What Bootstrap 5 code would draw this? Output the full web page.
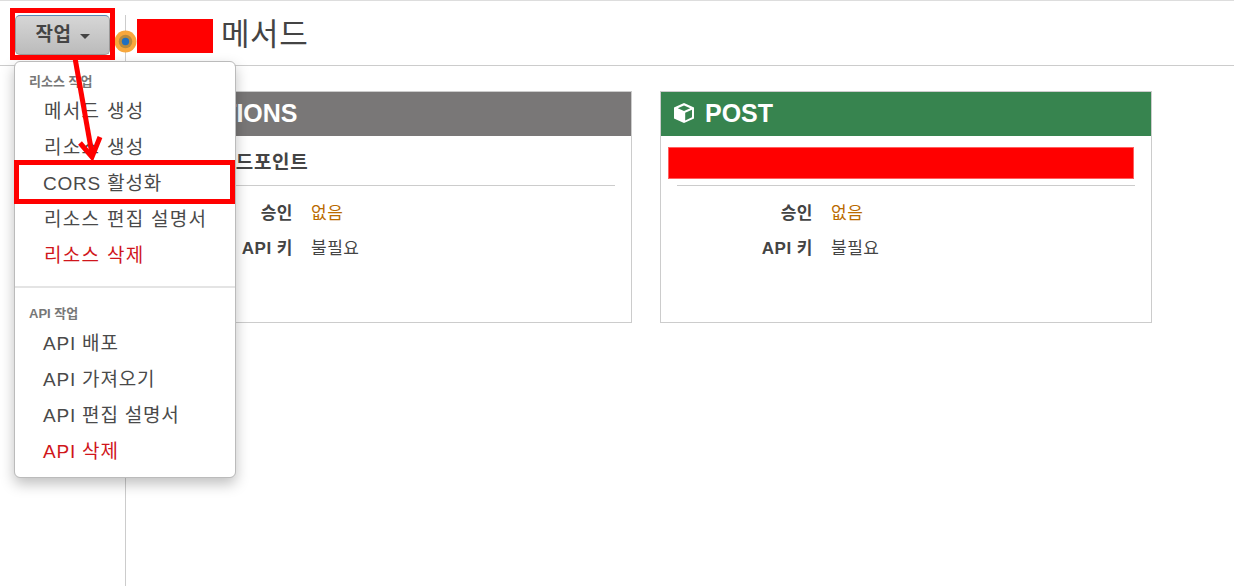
<!DOCTYPE html>
<html lang="ko">

<head>
  <meta charset="UTF-8" />
  <title>메서드</title>
  <link rel="stylesheet" href="https://cdn.jsdelivr.net/npm/bootstrap@5.3.3/dist/css/bootstrap.min.css" />
  <style>
    html, body { height: 586px; overflow: hidden; }
    body { font-family: "Liberation Sans", "Noto Sans CJK KR", sans-serif; color: #444; background: #fff; position: relative; }
    .top-bar { height: 66px; border-top: 1px solid #ddd; border-bottom: 1px solid #ccc; }
    .action-cell { width: 126px; padding-left: 15px; border-right: 1px solid #ccc; margin-top: 14px; height: 51px; }
    .action-btn { width: 95px; height: 40px; padding: 0; color: #444; font-size: 19px; letter-spacing: .6px; font-weight: 700; border: 1px solid #999; border-top-color: #5b87b5; border-radius: 5px; background: linear-gradient(#d6d6d6, #bbb); }
    .caret-mark { display: inline-block; margin-left: 8px; vertical-align: 2px; border-top: 5px solid #444; border-left: 5px solid transparent; border-right: 5px solid transparent; }
    .title-cell { padding-left: 11px; }
    .title-block { width: 76px; height: 34px; margin-top: 18px; background: #f00; }
    .title-text { margin: 17px 0 0 8px; font-size: 31px; letter-spacing: .6px; line-height: 34px; color: #444; }
    .side-line { position: absolute; left: 125px; top: 66px; bottom: 0; border-left: 1px solid #ccc; }
    .action-menu { position: absolute; left: 14px; top: 61px; width: 222px; height: 417px; margin: 0; padding: 11px 0 0; z-index: 5; border: 1px solid #bbb; border-radius: 6px; box-shadow: 0 6px 14px rgba(0, 0, 0, .25); --bs-dropdown-min-width: 0; }
    .menu-head { padding: 0 14px; margin-bottom: 3px; font-size: 13px; line-height: 18px; font-weight: 700; color: #777; }
    .menu-item { padding: 0 29px; height: 36px; line-height: 36px; font-size: 19px; letter-spacing: .8px; color: #4a4a4a; }
    .menu-ko { letter-spacing: 1.3px; }
    .menu-api { padding-left: 28px; }
    .menu-item.text-danger { color: #d0161b !important; }
    .menu-rule { margin: 12px 0 17px; border-top: 2px solid #e4e4e4; opacity: 1; }
    .panel-row { padding: 25px 0 0 140px; gap: 28px; }
    .method-panel { width: 492px; height: 232px; border: 1px solid #ccc; --bs-card-border-radius: 0; --bs-card-inner-border-radius: 0; }
    .method-panel .method-head { height: 44px; padding: 0 12px 2px; gap: 10px; color: #fff; font-size: 25px; font-weight: 700; line-height: 42px; border: 0; }
    .head-grey { background: #797777; }
    .head-green { background: #37844f; }
    .endpoint-line { height: 50px; margin: 0 16px; border-bottom: 1px solid #ccc; font-size: 19px; letter-spacing: .7px; font-weight: 700; line-height: 54px; text-align: left; position: relative; }
    .endpoint-block { position: absolute; left: -9px; top: 11px; width: 466px; height: 32px; background: #f00; border: 1px solid #ff6060; }
    .info-row { display: flex; height: 35px; line-height: 35px; font-size: 17px; letter-spacing: .5px; }
    .endpoint-line + .info-row { margin-top: 10px; }
    .info-key { width: 152px; text-align: right; font-weight: 700; color: #444; }
    .info-val { margin-left: 18px; }
    .val-none { color: #b96a00; }
    .status-dot { position: absolute; left: 114px; top: 30px; width: 23px; height: 23px; z-index: 6; }
    .note-layer { position: absolute; left: 0; top: 0; z-index: 10; pointer-events: none; }
  </style>
</head>

<body>
  <div class="top-bar d-flex">
    <div class="action-cell">
      <button type="button" class="btn action-btn">작업<span class="caret-mark"></span></button>
    </div>
    <div class="title-cell d-flex">
      <div class="title-block"></div>
      <div class="title-text">메서드</div>
    </div>
  </div>
  <div class="side-line"></div>

  <svg class="status-dot" viewBox="0 0 22 22">
    <circle cx="11" cy="11" r="10.5" fill="#f7a73c" />
    <circle cx="11" cy="11" r="6.5" fill="#b98a3c" />
    <circle cx="11" cy="11" r="3.5" fill="#1f6fc0" />
  </svg>

  <div class="dropdown-menu show action-menu">
    <div class="menu-head">리소스 작업</div>
    <a class="dropdown-item menu-item menu-ko" href="#">메서드 생성</a>
    <a class="dropdown-item menu-item menu-ko" href="#">리소스 생성</a>
    <a class="dropdown-item menu-item menu-api" href="#">CORS 활성화</a>
    <a class="dropdown-item menu-item menu-ko" href="#">리소스 편집 설명서</a>
    <a class="dropdown-item menu-item menu-ko text-danger" href="#">리소스 삭제</a>
    <hr class="dropdown-divider menu-rule" />
    <div class="menu-head">API 작업</div>
    <a class="dropdown-item menu-item menu-api" href="#">API 배포</a>
    <a class="dropdown-item menu-item menu-api" href="#">API 가져오기</a>
    <a class="dropdown-item menu-item menu-api" href="#">API 편집 설명서</a>
    <a class="dropdown-item menu-item menu-api text-danger" href="#">API 삭제</a>
  </div>

  <div class="panel-row d-flex">
    <div class="card method-panel">
      <div class="card-header method-head head-grey d-flex align-items-center">
        <svg width="22" height="22" viewBox="0 0 22 22">
          <path d="M11 1 L21 5.5 V16.5 L11 21 L1 16.5 V5.5 Z" fill="#fff" />
          <path d="M11 3.5 L17.2 6.2 L11 9 L4.8 6.2 Z" fill="#797777" />
          <path d="M12.2 10.8 L19 7.8 V15.3 L12.2 18.4 Z" fill="#797777" />
        </svg>
        <span>OPTIONS</span>
      </div>
      <div class="endpoint-line">메서드 엔드포인트</div>
      <div class="info-row"><div class="info-key">승인</div><div class="info-val val-none">없음</div></div>
      <div class="info-row"><div class="info-key">API 키</div><div class="info-val">불필요</div></div>
    </div>
    <div class="card method-panel">
      <div class="card-header method-head head-green d-flex align-items-center">
        <svg width="22" height="22" viewBox="0 0 22 22">
          <path d="M11 1 L21 5.5 V16.5 L11 21 L1 16.5 V5.5 Z" fill="#fff" />
          <path d="M11 3.5 L17.2 6.2 L11 9 L4.8 6.2 Z" fill="#37844f" />
          <path d="M12.2 10.8 L19 7.8 V15.3 L12.2 18.4 Z" fill="#37844f" />
        </svg>
        <span>POST</span>
      </div>
      <div class="endpoint-line"><div class="endpoint-block"></div></div>
      <div class="info-row"><div class="info-key">승인</div><div class="info-val val-none">없음</div></div>
      <div class="info-row"><div class="info-key">API 키</div><div class="info-val">불필요</div></div>
    </div>
  </div>

  <!-- red annotations drawn over the screenshot -->
  <svg class="note-layer" width="1234" height="586">
    <rect x="12.5" y="10.5" width="100" height="47" fill="none" stroke="#f00" stroke-width="5" />
    <rect x="16.5" y="162.5" width="216" height="39" fill="none" stroke="#f00" stroke-width="5" />
    <path d="M75 58 L92 154" fill="none" stroke="#f00" stroke-width="5" />
    <path d="M80 143 L92 157 L100 137" fill="none" stroke="#f00" stroke-width="5" />
  </svg>
</body>

</html>
